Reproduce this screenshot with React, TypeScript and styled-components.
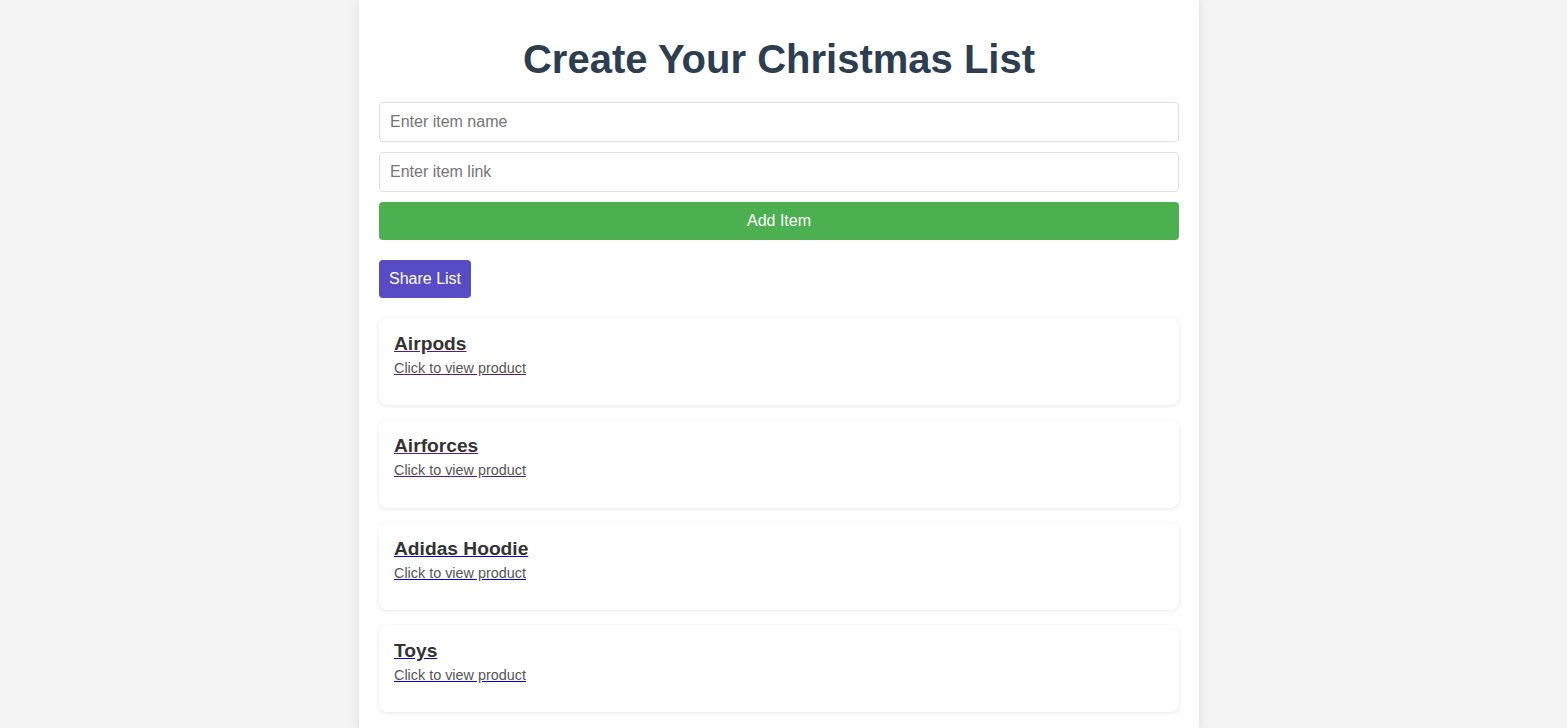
import React from "react";
import styled, { createGlobalStyle } from "styled-components";

const GlobalStyle = createGlobalStyle`
  html, body {
    margin: 0;
    padding: 0;
    background: #f4f4f4;
    font-family: Arial, "Liberation Sans", Helvetica, sans-serif;
  }
  * { box-sizing: border-box; }
`;

const Page = styled.div`
  display: flex;
  justify-content: center;
  padding-right: 9px;
  min-height: 100vh;
`;

const Container = styled.main`
  width: 840px;
  background: #fff;
  padding: 20px;
  box-shadow: 0 0 10px rgba(0, 0, 0, 0.1);
`;

const Title = styled.h1`
  margin: 17px 0 20px;
  text-align: center;
  color: #2c3e50;
  font-size: 40px;
  font-weight: bold;
`;

const Form = styled.div`
  display: flex;
  flex-direction: column;
  gap: 10px;
`;

const Input = styled.input`
  width: 100%;
  height: 40px;
  padding: 10px;
  font-size: 16px;
  font-family: Arial, "Liberation Sans", sans-serif;
  border: 1px solid #ddd;
  border-radius: 4px;
  color: #333;
  &::placeholder { color: #757575; }
`;

const Button = styled.button<{ $bg: string; $full?: boolean }>`
  display: block;
  width: ${(p) => (p.$full ? "100%" : "auto")};
  height: 38px;
  padding: 0 10px;
  background: ${(p) => p.$bg};
  color: #fff;
  border: none;
  border-radius: 4px;
  font-size: 16px;
  font-family: Arial, "Liberation Sans", sans-serif;
  cursor: pointer;
`;

const ShareRow = styled.div`
  margin: 20px 0;
`;

const List = styled.div`
  display: flex;
  flex-direction: column;
  gap: 15px;
`;

const Card = styled.a<{ $line: string }>`
  display: block;
  background: #fff;
  border-radius: 8px;
  padding: 15px;
  height: 87.3px;
  flex-shrink: 0;
  box-shadow: 0 1px 4px rgba(0, 0, 0, 0.1);
  color: ${(p) => p.$line};
  text-decoration: underline;
  text-decoration-color: ${(p) => p.$line};
`;

const ItemName = styled.h3`
  margin: 0 0 5px;
  font-size: 19.2px;
  line-height: 22px;
  font-weight: bold;
  color: #333;
`;

const ItemLink = styled.p`
  margin: 0;
  font-size: 14.4px;
  line-height: 17px;
  color: #555;
`;

const items = [
  { name: "Airpods", visited: true },
  { name: "Airforces", visited: true },
  { name: "Adidas Hoodie", visited: false },
  { name: "Toys", visited: false },
];

export default function App() {
  return (
    <>
      <GlobalStyle />
      <Page>
        <Container>
          <Title>Create Your Christmas List</Title>
          <Form>
            <Input placeholder="Enter item name" />
            <Input placeholder="Enter item link" />
            <Button $bg="#4caf50" $full>Add Item</Button>
          </Form>
          <ShareRow>
            <Button $bg="#574bc6">Share List</Button>
          </ShareRow>
          <List>
            {items.map((it) => (
              <Card key={it.name} href="#" $line={it.visited ? "#551a8b" : "#0000ee"}>
                <ItemName>{it.name}</ItemName>
                <ItemLink>Click to view product</ItemLink>
              </Card>
            ))}
          </List>
        </Container>
      </Page>
    </>
  );
}
